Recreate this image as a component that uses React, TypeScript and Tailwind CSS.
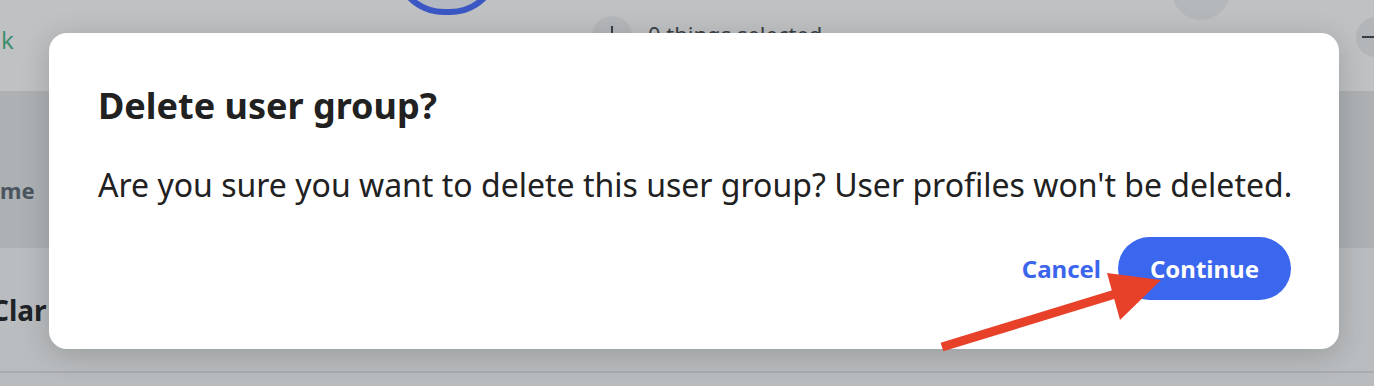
import React from "react";

export default function App() {
  return (
    <div className="relative w-full h-[386px] overflow-hidden bg-[#b9bcbe]" style={{ fontFamily: '"Noto Sans", sans-serif' }}>
      {/* underlying page (dimmed) */}
      <div className="flex flex-col h-full">
        <div className="relative h-[91px] bg-[#bfc1c3]">
          <span className="absolute left-[1px] top-[22px] text-[24px] text-[#3f8f6c]">k</span>
          <div className="absolute left-[392px] top-[-90px] w-[110px] h-[105px] rounded-full border-[6px] border-[#3b57c4] bg-[#b4b8c0]" />
          <div className="absolute left-[592px] top-[16px] w-[40px] h-[40px] rounded-full bg-[#b5b8bb] flex justify-center">
            <div className="mt-[10px] w-[2px] h-[14px] bg-[#3a3f45]" />
          </div>
          <span className="absolute left-[648px] top-[18px] text-[22px] text-[#3a3f45]">0 things selected</span>
          <div className="absolute left-[1172px] top-[-40px] w-[58px] h-[60px] rounded-full bg-[#b5b8bb]" />
          <div className="absolute left-[1356px] top-[17px] w-[40px] h-[40px] rounded-full bg-[#b3b6b9] flex items-center">
            <div className="ml-[6px] w-[14px] h-[2px] bg-[#3a3f45]" />
          </div>
        </div>
        <div className="relative h-[157px] bg-[#aeb1b4]">
          <span className="absolute left-0 top-[84px] text-[22px] leading-[30px] font-bold text-[#4b5560]">me</span>
        </div>
        <div className="relative h-[123px] bg-[#babdbf]">
          <span className="absolute left-[-9px] top-[44px] text-[28px] leading-[36px] font-bold text-[#1f2226]">Clar</span>
        </div>
        <div className="h-[2px] bg-[#a9acaf]" />
        <div className="flex-1 bg-[#b9bcbe]" />
      </div>

      {/* dialog */}
      <div className="absolute left-[49px] top-[33px] w-[1290px] h-[316px] rounded-[18px] bg-white shadow-[0_6px_30px_rgba(0,0,0,0.18)] px-[49px] pt-[51px] flex flex-col">
        <h2 className="text-[36px] leading-[44px] font-bold text-[#212121]">Delete user group?</h2>
        <p className="mt-[35px] text-[32px] leading-[44px] text-[#212121] whitespace-nowrap">
          Are you sure you want to delete this user group? User profiles won't be deleted.
        </p>
        <div className="mt-[30px] flex justify-end items-center gap-[17px] mr-[-1px]">
          <button className="text-[24px] font-bold text-[#3a65ec]">Cancel</button>
          <button className="h-[63px] w-[173px] rounded-full bg-[#3b66ee] text-white text-[24px] font-bold">Continue</button>
        </div>
      </div>

      {/* red annotation arrow */}
      <svg className="absolute left-0 top-0 pointer-events-none" width="1374" height="386" viewBox="0 0 1374 386">
        <line x1="942" y1="347" x2="1125" y2="291" stroke="#e8412a" strokeWidth="9" />
        <polygon points="1107,273 1161,280 1120,320" fill="#e8412a" />
      </svg>
    </div>
  );
}
